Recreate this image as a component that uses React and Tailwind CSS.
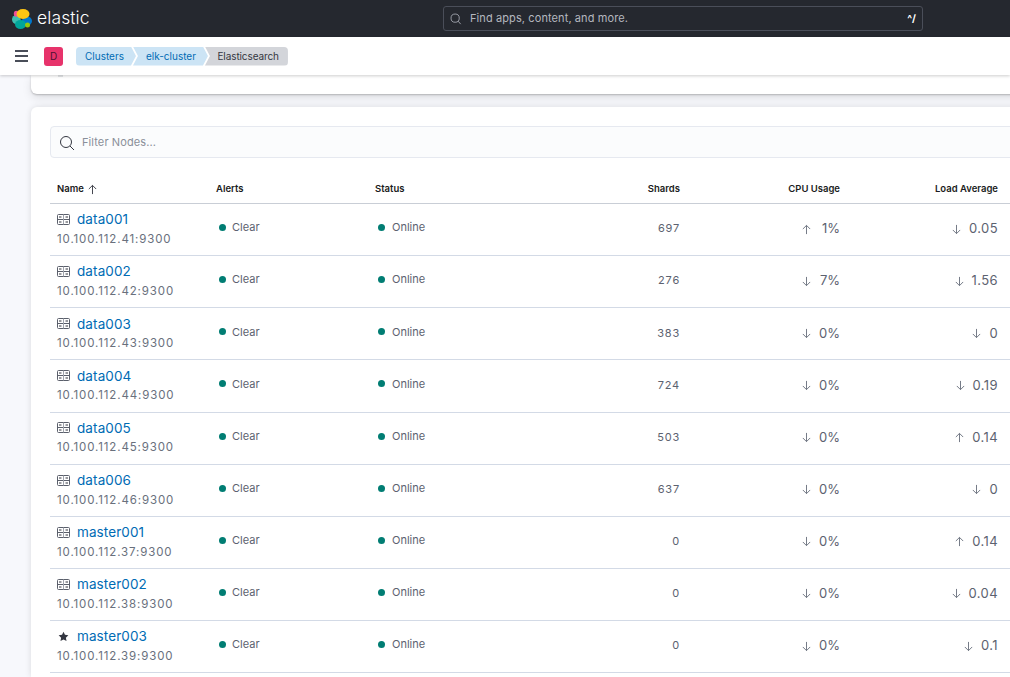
import React from "react";

const rows = [
  ["data001", "10.100.112.41:9300", "697", "up", "1%", "down", "0.05"],
  ["data002", "10.100.112.42:9300", "276", "down", "7%", "down", "1.56"],
  ["data003", "10.100.112.43:9300", "383", "down", "0%", "down", "0"],
  ["data004", "10.100.112.44:9300", "724", "down", "0%", "down", "0.19"],
  ["data005", "10.100.112.45:9300", "503", "down", "0%", "up", "0.14"],
  ["data006", "10.100.112.46:9300", "637", "down", "0%", "down", "0"],
  ["master001", "10.100.112.37:9300", "0", "down", "0%", "up", "0.14"],
  ["master002", "10.100.112.38:9300", "0", "down", "0%", "down", "0.04"],
  ["master003", "10.100.112.39:9300", "0", "down", "0%", "down", "0.1", true],
];

const Arrow = ({ dir, color = "#69707d", size = 11 }) => (
  <svg width={size} height={size} viewBox="0 0 12 12" fill="none" stroke={color} strokeWidth="1">
    {dir === "up" ? <path d="M6 11V1.500M2 5.500l4-4 4 4" /> : <path d="M6 1v9.500M2 6.500l4 4 4-4" />}
  </svg>
);

const ServerIcon = () => (
  <svg width="13" height="11" viewBox="0 0 13 11" fill="none" stroke="#5a5f6b" strokeWidth="1">
    <rect x="0.500" y="0.500" width="12" height="10" rx="1" />
    <path d="M0.500 5.500h12" />
    <path d="M6.500 0.500v10" stroke="#a0a4ad" />
    <path d="M2 3h2.500M8.500 3h2.500M2 8h2.500M8.500 8h2.500" stroke="#343741" />
  </svg>
);

const Star = () => (
  <svg width="11" height="11" viewBox="0 0 12 12" fill="#343741">
    <path d="M6 .8l1.600 3.400 3.700.5-2.700 2.600.7 3.700L6 9.200 2.700 11l.7-3.700L.7 4.700l3.700-.5z" />
  </svg>
);

const Logo = () => (
  <svg width="20" height="20" viewBox="0 0 20 20">
    <ellipse cx="4.300" cy="10.500" rx="4.300" ry="4.500" fill="#3ebeb0" />
    <ellipse cx="4.200" cy="4.800" rx="2.400" ry="3" fill="#f04e98" />
    <ellipse cx="15" cy="12" rx="5" ry="4.500" fill="#0077cc" />
    <ellipse cx="8.500" cy="15.500" rx="5.500" ry="4.500" fill="#00a69b" />
    <circle cx="15.500" cy="16" r="2.500" fill="#93c90e" />
    <ellipse cx="11" cy="5" rx="6.500" ry="5" fill="#fec514" />
  </svg>
);

const Status = ({ label, gap }) => (
  <div className={`flex items-center pl-[3px] text-[11px] text-[#5c6270] ${gap}`}>
    <span className="w-[7px] h-[7px] rounded-full bg-[#017d73]" />
    <span>{label}</span>
  </div>
);

const Row = ({ r }) => (
  <div className="grid grid-cols-[160px_159px_159px_158px_160px_158px_6px] h-[52.125px] border-b border-[#d3dae6] items-center">
    <div className="pl-[7px] mb-[1.4px]">
      <div className="flex items-center gap-[7px] h-[19px]">
        <span className="w-[13px] flex justify-center">{r[7] ? <Star /> : <ServerIcon />}</span>
        <span className="text-[13.5px] text-[#006bb4] tracking-[0.1px]">{r[0]}</span>
      </div>
      <div className="text-[11.5px] text-[#69707d] tracking-[0.87px] leading-[18px] mt-[1px]">{r[1]}</div>
    </div>
    <div className="pl-[6px] mb-[4.2px]"><Status label="Clear" gap="gap-[6px]" /></div>
    <div className="pl-[6px] mb-[4.2px]"><Status label="Online" gap="gap-[7px]" /></div>
    <div className="pr-[6px] pb-[2px] text-right text-[11px] text-[#5c6270] tracking-[0.8px]">{r[2]}</div>
    <div className="pr-[6px] pb-[1px] flex items-center justify-end gap-[6px] text-[#5c6270]">
      <Arrow dir={r[3]} />
      <span className="text-[13px] w-[22px] text-right">{r[4]}</span>
    </div>
    <div className="pr-[6px] pb-[1px] flex items-center justify-end gap-[7px] text-[#5c6270]">
      <Arrow dir={r[5]} />
      <span className="text-[13px] tracking-[0.4px]">{r[6]}</span>
    </div>
    <div />
  </div>
);

export default function App() {
  return (
    <div className="w-[1010px] h-[677px] overflow-hidden bg-[#f7f8fc] font-['Inter','Liberation_Sans',sans-serif] flex flex-col">
      <header className="h-[37px] shrink-0 bg-[#25282f] flex items-center relative">
        <div className="flex items-center pl-[12px] gap-[5px] w-[443px]">
          <Logo />
          <span className="text-[17.5px] font-light text-white tracking-[0.1px]">elastic</span>
        </div>
        <div className="w-[480px] h-[25px] border border-[#4a4e59] rounded-[3px] flex items-center pl-[6px] pr-[6px] bg-[#25282f]">
          <svg width="12" height="12" viewBox="0 0 14 14" fill="none" stroke="#a8acb5" strokeWidth="1">
            <circle cx="6" cy="6" r="4.800" />
            <path d="M9.500 9.500l3 3.500" />
          </svg>
          <span className="ml-[8px] text-[11px] text-[#b4b7bf] flex-1 tracking-[0.1px]">Find apps, content, and more.</span>
          <span className="text-[10px] font-bold text-white">^/</span>
        </div>
      </header>
      <div className="h-[38px] shrink-0 bg-white flex items-center shadow-[0_1px_3px_rgba(0,0,0,0.2)] relative z-10">
        <div className="w-[44px] pl-[15px]">
          <div className="w-[13px] flex flex-col gap-[3px]">
            <span className="h-[2px] bg-[#4a4e59]" />
            <span className="h-[2px] bg-[#4a4e59]" />
            <span className="h-[2px] bg-[#4a4e59]" />
          </div>
        </div>
        <div className="w-[19px] h-[19px] rounded-[3px] bg-[#e7336b] text-[#4c1130] text-[10px] flex items-center justify-center">D</div>
        <nav className="flex ml-[13px] text-[10px] h-[19px] items-center">
          <span className="h-[19px] flex items-center pl-[9px] pr-[12px] bg-[#cce4f5] text-[#006bb4] rounded-l-[4px] [clip-path:polygon(0_0,calc(100%-5px)_0,100%_50%,calc(100%-5px)_100%,0_100%)]">Clusters</span>
          <span className="h-[19px] flex items-center pl-[13px] pr-[12px] -ml-[3px] bg-[#cce4f5] text-[#006bb4] [clip-path:polygon(0_0,calc(100%-5px)_0,100%_50%,calc(100%-5px)_100%,0_100%,5px_50%)]">elk-cluster</span>
          <span className="h-[19px] flex items-center pl-[12.5px] pr-[9px] -ml-[3px] bg-[#d3d5da] text-[#343741] tracking-[-0.1px] rounded-r-[4px] [clip-path:polygon(0_0,100%_0,100%_100%,0_100%,5px_50%)]">Elasticsearch</span>
        </nav>
      </div>
      <div className="ml-[31px] w-[1000px] h-[19px] shrink-0 bg-white rounded-b-[6px] shadow-[0_1px_2px_rgba(0,0,0,0.22),0_4px_10px_rgba(0,0,0,0.1)]">
        <div className="ml-[27px] w-[5px] h-[2px] bg-[#e3e5e8]" />
      </div>
      <main className="ml-[31px] mt-[13px] w-[1000px] flex-1 bg-white rounded-t-[6px] shadow-[0_0_6px_rgba(0,0,0,0.12)] pl-[19px] pt-[19px]">
        <div className="h-[32px] border border-[#e6e9f0] rounded-[4px] bg-[#fbfcfd] flex items-center pl-[8px] pt-[1px]">
          <svg width="16" height="16" viewBox="0 0 16 16" fill="none" stroke="#343741" strokeWidth="1">
            <circle cx="7" cy="7" r="5.500" />
            <path d="M11 11l4 4" />
          </svg>
          <span className="ml-[7px] text-[11px] tracking-[0.1px] text-[#8a8f99]">Filter Nodes...</span>
        </div>
        <div className="grid grid-cols-[160px_159px_159px_158px_160px_158px_6px] h-[46.05px] items-center border-b border-[#c9ced6] pt-[17px] text-[9.5px] font-semibold text-[#1a1c21]">
          <div className="pl-[7px] flex items-center gap-[3px]">
            <span>Name</span>
            <Arrow dir="up" color="#343741" />
          </div>
          <div className="pl-[6px]">Alerts</div>
          <div className="pl-[6px]">Status</div>
          <div className="pr-[6px] text-right">Shards</div>
          <div className="pr-[6px] text-right">CPU Usage</div>
          <div className="pr-[6px] text-right">Load Average</div>
          <div />
        </div>
        {rows.map((r) => (
          <Row key={r[0]} r={r} />
        ))}
      </main>
    </div>
  );
}
